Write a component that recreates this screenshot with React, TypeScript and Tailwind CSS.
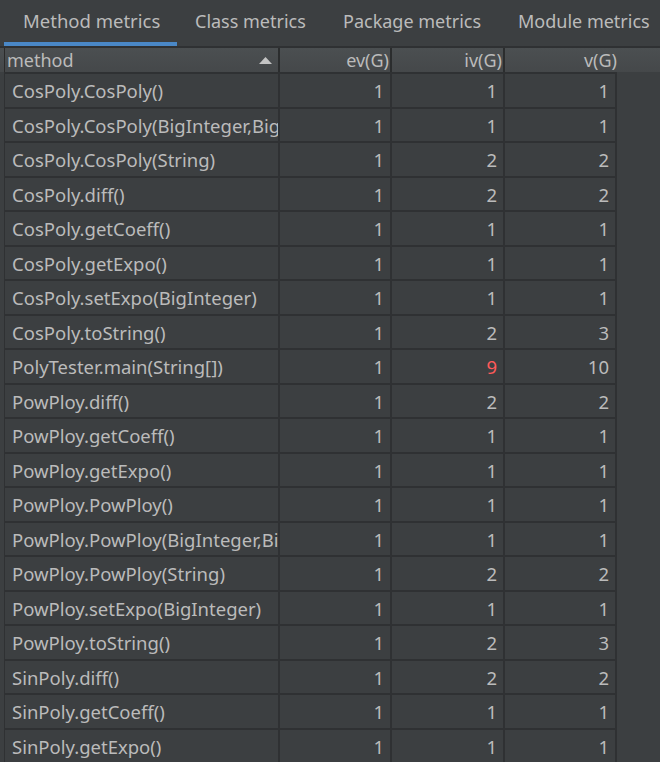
import React from "react";

const rows: [string, string, string, string][] = [
  ["CosPoly.CosPoly()", "1", "1", "1"],
  ["CosPoly.CosPoly(BigInteger,BigInteger)", "1", "1", "1"],
  ["CosPoly.CosPoly(String)", "1", "2", "2"],
  ["CosPoly.diff()", "1", "2", "2"],
  ["CosPoly.getCoeff()", "1", "1", "1"],
  ["CosPoly.getExpo()", "1", "1", "1"],
  ["CosPoly.setExpo(BigInteger)", "1", "1", "1"],
  ["CosPoly.toString()", "1", "2", "3"],
  ["PolyTester.main(String[])", "1", "9", "10"],
  ["PowPloy.diff()", "1", "2", "2"],
  ["PowPloy.getCoeff()", "1", "1", "1"],
  ["PowPloy.getExpo()", "1", "1", "1"],
  ["PowPloy.PowPloy()", "1", "1", "1"],
  ["PowPloy.PowPloy(BigInteger,BigInteger)", "1", "1", "1"],
  ["PowPloy.PowPloy(String)", "1", "2", "2"],
  ["PowPloy.setExpo(BigInteger)", "1", "1", "1"],
  ["PowPloy.toString()", "1", "2", "3"],
  ["SinPoly.diff()", "1", "2", "2"],
  ["SinPoly.getCoeff()", "1", "1", "1"],
  ["SinPoly.getExpo()", "1", "1", "1"],
];

export default function App() {
  return (
    <div
      className="w-[660px] h-[762px] overflow-hidden bg-[#3c3f41] text-[#bbbbbb] text-[18.5px]"
      style={{ fontFamily: '"Noto Sans", "Open Sans", sans-serif' }}
    >
      {/* Tab bar */}
      <div className="flex h-[48px] border-b-2 border-[#2f3133] pl-[4px] text-[18px]">
        <div className="flex items-center w-[173px] pl-[19px] h-full whitespace-nowrap border-b-4 border-[#4a88c7] text-[18.5px]">
          Method metrics
        </div>
        <div className="flex items-center w-[148px] pl-[18px] h-full whitespace-nowrap pb-[4px]">
          Class metrics
        </div>
        <div className="flex items-center w-[175px] pl-[18px] h-full whitespace-nowrap pb-[4px]">
          Package metrics
        </div>
        <div className="flex items-center pl-[18px] h-full whitespace-nowrap pb-[4px]">
          Module metrics
        </div>
      </div>

      {/* Header */}
      <div className="flex h-[24px] pl-[4px] bg-gradient-to-b from-[#4b4f51] to-[#45484a] text-[18px]">
        <div className="relative flex items-center w-[276px] border-l border-[#2b2b2b] border-r-2 border-r-[#2b2d2e] pl-[2px] leading-none">
          method
          <svg className="absolute right-[6px] top-[9px]" width="13" height="7" viewBox="0 0 13 7">
            <polygon points="6.5,0 13,7 0,7" fill="#c4c4c4" />
          </svg>
        </div>
        <div className="flex items-center justify-end w-[112px] border-r-2 border-[#2b2d2e] pr-[1px] leading-none">
          ev(G)
        </div>
        <div className="flex items-center justify-end w-[113px] border-r-2 border-[#2b2d2e] pr-[1px] leading-none">
          iv(G)
        </div>
        <div className="flex items-center justify-end w-[112px] leading-none">v(G)</div>
      </div>

      {/* Rows */}
      <div className="pl-[4px]">
        {rows.map((r, i) => (
          <div key={i} className="flex h-[34.5px] border-t-2 border-[#2f3133] w-[613px]">
            <div className="flex items-center w-[276px] border-l border-[#2f3133] border-r-2 border-r-[#2f3133] pl-[7px] pt-[2px] whitespace-nowrap overflow-hidden">
              {r[0]}
            </div>
            <div className="flex items-center justify-end w-[112px] border-r-2 border-[#2f3133] pr-[6px] pt-[2px]">
              {r[1]}
            </div>
            <div
              className={
                "flex items-center justify-end w-[113px] border-r-2 border-[#2f3133] pr-[6px] pt-[2px] " +
                (r[2] === "9" ? "text-[#ff5a5a]" : "")
              }
            >
              {r[2]}
            </div>
            <div className="flex items-center justify-end w-[112px] border-r-2 border-[#2f3133] pr-[6px] pt-[2px]">
              {r[3]}
            </div>
          </div>
        ))}
      </div>
    </div>
  );
}
